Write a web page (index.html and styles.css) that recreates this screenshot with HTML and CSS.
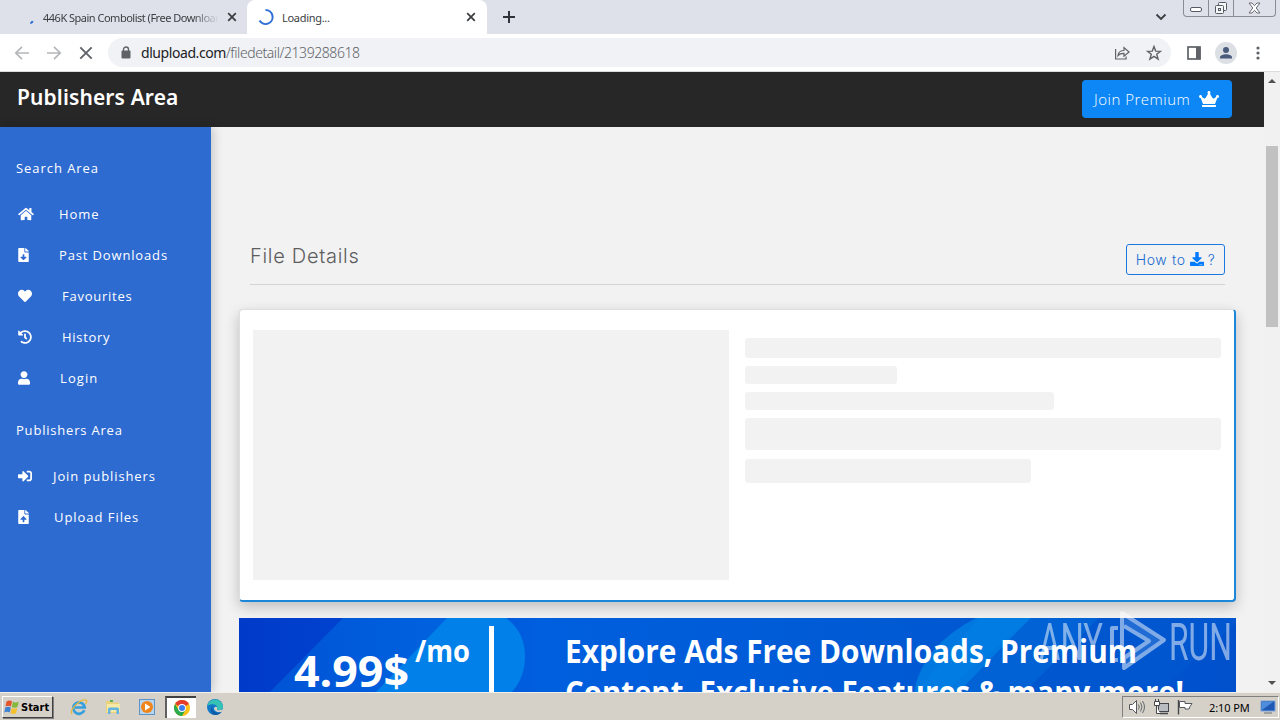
FILE: index.html
```html
<!DOCTYPE html>
<html lang="en">
<head>
    <meta charset="UTF-8">
    <meta name="viewport" content="width=device-width, initial-scale=1.0">
    <title>Loading...</title>
    <link rel="stylesheet" href="styles.css">
</head>
<body>
    <!-- Tabs -->
    <div class="tabs">
        <div class="tab">
            <svg class="spinner" width="16" height="16" viewBox="0 0 16 16"><path d="M6.300 14.200q2-.3 2.300-2.200" fill="none" stroke="#2f6fd6" stroke-width="2"/></svg>
            <span class="tab-title tab-fade">446K Spain Combolist (Free Downloads)</span>
            <svg class="tab-close" width="10" height="10" viewBox="0 0 10 10"><path d="M1.200 1.200l7.600 7.600M8.800 1.200L1.200 8.800" stroke="#3c4043" stroke-width="1.800"/></svg>
        </div>
        <div class="tab active">
            <svg class="spinner" width="16" height="16" viewBox="0 0 16 16"><path d="M7.500 1A7 7 0 1 1 1.500 11.500" fill="none" stroke="#2f6fd6" stroke-width="2"/></svg>
            <span class="tab-title">Loading...</span>
            <svg class="tab-close" width="10" height="10" viewBox="0 0 10 10"><path d="M1.200 1.200l7.600 7.600M8.800 1.200L1.200 8.800" stroke="#3c4043" stroke-width="1.800"/></svg>
        </div>
        <svg class="new-tab" width="12" height="12" viewBox="0 0 12 12"><path d="M6 0v12M0 6h12" stroke="#303338" stroke-width="2"/></svg>
        <svg class="tab-search" width="12" height="8" viewBox="0 0 12 8"><path d="M1.500 1.500L6 6l4.500-4.500" fill="none" stroke="#3c4043" stroke-width="1.900"/></svg>
        <div class="win-buttons">
            <span class="win-min"><svg width="13" height="6" viewBox="0 0 13 6"><rect x=".5" y=".5" width="11" height="4" rx="1.500" fill="#fff" stroke="#555a63"/></svg></span>
            <span class="win-max"><svg width="14" height="14" viewBox="0 0 14 14" fill="#f5f6f8" stroke="#555a63"><rect x="4.500" y="1.500" width="8" height="8" rx="1"/><rect x="1.500" y="4.500" width="8" height="8" rx="1"/><rect x="4.500" y="7.500" width="2" height="2"/></svg></span>
            <span class="win-close"><svg width="13" height="12" viewBox="0 0 13 12"><path d="M1 1h3l2.500 2.700L9 1h3L8.200 6l3.800 5H9L6.500 8.300 4 11H1l3.800-5z" fill="#fff" stroke="#666b74"/></svg></span>
        </div>
    </div>

    <!-- Toolbar -->
    <div class="toolbar">
        <svg class="nav-icon" width="16" height="16" viewBox="0 0 16 16" fill="none" stroke="#b4b6b9" stroke-width="1.700"><path d="M15 8H2M8 1.800L1.800 8 8 14.200"/></svg>
        <svg class="nav-icon" width="16" height="16" viewBox="0 0 16 16" fill="none" stroke="#b4b6b9" stroke-width="1.700"><path d="M1 8h13M8 1.800L14.200 8 8 14.200"/></svg>
        <svg class="nav-icon" width="16" height="16" viewBox="0 0 16 16" fill="none" stroke="#5f6368" stroke-width="1.900"><path d="M2.300 2.300l11.400 11.400M13.700 2.300L2.300 13.700"/></svg>
        <div class="address">
            <svg width="10" height="13" viewBox="0 0 10 13"><rect x=".5" y="4.500" width="9" height="8" rx="1" fill="#5f6368"/><path d="M2.500 5V3.500a2.500 2.500 0 0 1 5 0V5" fill="none" stroke="#5f6368" stroke-width="1.400"/></svg>
            <span class="url"><b>dlupload.com</b>/filedetail/2139288618</span>
            <svg class="share" width="16" height="14" viewBox="0 0 16 14" fill="none" stroke="#5f6368" stroke-width="1.200"><path d="M1.600 3v10h10.500v-2.500M4 9.500C4.500 6 6.500 4.500 10 4.500v-3l5 4.500-5 4.200V7.300C7.500 7.200 5.500 7.800 4 9.500z"/></svg>
            <svg width="16" height="16" viewBox="0 0 16 16" fill="none" stroke="#5f6368" stroke-width="1.400"><path d="M8 1.500l1.700 4.600 4.900.2-3.900 3 1.400 4.700L8 11.300 3.900 14l1.400-4.700-3.900-3 4.900-.2z"/></svg>
        </div>
        <svg class="side-panel" width="14" height="14" viewBox="0 0 14 14"><rect x="1" y="1" width="12" height="12" fill="#fff" stroke="#5f6368" stroke-width="1.700"/><path d="M9 1h4.500v12H9z" fill="#5f6368"/></svg>
        <svg class="avatar" width="22" height="22" viewBox="0 0 22 22"><circle cx="11" cy="11" r="11" fill="#dcdfe4"/><circle cx="11" cy="8" r="3" fill="#4b5b7c"/><path d="M5 16.500v-1.300c0-2 3.500-3 6-3s6 1 6 3v1.300z" fill="#4b5b7c"/></svg>
        <svg class="dots" width="4" height="14" viewBox="0 0 4 14" fill="#5f6368"><circle cx="2" cy="2" r="1.600"/><circle cx="2" cy="7" r="1.600"/><circle cx="2" cy="12" r="1.600"/></svg>
    </div>

    <!-- Page -->
    <div class="viewport">
        <div class="page">
            <header class="topbar">
                <span class="brand">Publishers Area</span>
                <a class="btn-premium">Join Premium
                    <svg width="20" height="16" viewBox="0 0 640 512" fill="#fff"><path d="M528 448H112c-8.800 0-16 7.200-16 16v32c0 8.800 7.200 16 16 16h416c8.800 0 16-7.200 16-16v-32c0-8.800-7.200-16-16-16zm64-320c-26.500 0-48 21.500-48 48 0 7.100 1.600 13.700 4.400 19.800L476 239.200c-15.400 9.200-35.300 4-44.200-11.600L350.300 85C361 76.200 368 63 368 48c0-26.500-21.500-48-48-48s-48 21.500-48 48c0 15 7 28.200 17.700 37l-81.500 142.600c-8.900 15.600-28.900 20.800-44.200 11.600l-72.300-43.400c2.700-6 4.400-12.700 4.400-19.800 0-26.500-21.500-48-48-48S0 149.500 0 176s21.500 48 48 48c2.600 0 5.200-.4 7.700-.8L128 416h384l72.300-192.800c2.500.4 5.100.8 7.700.8 26.500 0 48-21.500 48-48s-21.500-48-48-48z"/></svg>
                </a>
            </header>
            <div class="content">
                <nav class="sidebar">
                    <h3>Search Area</h3>
                    <a class="item"><svg width="16" height="14" viewBox="0 0 576 512"><path d="M280.370 148.260L96 300.110V464a16 16 0 0 0 16 16l112.060-.29a16 16 0 0 0 15.920-16V368a16 16 0 0 1 16-16h64a16 16 0 0 1 16 16v95.640a16 16 0 0 0 16 16.050L464 480a16 16 0 0 0 16-16V300L295.670 148.260a12.190 12.190 0 0 0-15.300 0zM571.600 251.470L488 182.560V44.050a12 12 0 0 0-12-12h-56a12 12 0 0 0-12 12v72.610L318.470 43a48 48 0 0 0-61 0L4.340 251.470a12 12 0 0 0-1.600 16.900l25.500 31A12 12 0 0 0 45.150 301l235.220-193.740a12.190 12.190 0 0 1 15.300 0L530.900 301a12 12 0 0 0 16.900-1.600l25.500-31a12 12 0 0 0-1.700-16.930z"/></svg><span class="home">Home</span></a>
                    <a class="item"><svg width="11" height="14" viewBox="0 0 384 512"><path d="M224 136V0H24C10.700 0 0 10.700 0 24v464c0 13.300 10.700 24 24 24h336c13.300 0 24-10.700 24-24V160H248c-13.200 0-24-10.800-24-24zm76.450 211.360l-96.420 95.700c-6.650 6.610-17.390 6.610-24.040 0l-96.420-95.700C73.420 337.290 80.540 320 94.820 320H160v-80c0-8.840 7.160-16 16-16h32c8.840 0 16 7.160 16 16v80h65.180c14.280 0 21.400 17.290 11.270 27.360zM377 105L279.100 7c-4.500-4.500-10.600-7-17-7H256v128h128v-6.100c0-6.300-2.500-12.400-7-16.900z"/></svg><span class="past">Past Downloads</span></a>
                    <a class="item"><svg width="14" height="14" viewBox="0 0 512 512"><path d="M462.300 62.600C407.500 15.900 326 24.300 275.700 76.200L256 96.500l-19.700-20.300C186.100 24.300 104.500 15.900 49.700 62.600c-62.800 53.600-66.100 149.800-9.900 207.900l193.500 199.800c12.500 12.900 32.800 12.900 45.300 0l193.500-199.800c56.300-58.100 53-154.300-9.800-207.900z"/></svg><span class="fav">Favourites</span></a>
                    <a class="item"><svg width="14" height="14" viewBox="0 0 512 512"><path d="M504 255.531c.253 136.640-111.180 248.372-247.820 248.468-59.015.042-113.223-20.530-155.822-54.911-11.077-8.940-11.905-25.541-1.839-35.607l11.267-11.267c8.609-8.609 22.353-9.551 31.891-1.984C173.062 425.135 212.781 440 256 440c101.705 0 184-82.311 184-184 0-101.705-82.311-184-184-184-48.814 0-93.149 18.969-126.068 49.932l50.754 50.754c10.080 10.080 2.941 27.314-11.313 27.314H24c-8.837 0-16-7.163-16-16V38.627c0-14.254 17.234-21.393 27.314-11.314l49.372 49.372C129.209 34.136 189.552 8 256 8c136.810 0 247.747 110.780 248 247.531zm-180.912 78.784l9.823-12.630c8.138-10.463 6.253-25.542-4.210-33.679L288 256.349V152c0-13.255-10.745-24-24-24h-16c-13.255 0-24 10.745-24 24v135.651l65.409 50.874c10.463 8.137 25.541 6.253 33.679-4.210z"/></svg><span class="hist">History</span></a>
                    <a class="item"><svg width="12" height="14" viewBox="0 0 448 512"><path d="M224 256c70.700 0 128-57.300 128-128S294.700 0 224 0 96 57.300 96 128s57.300 128 128 128zm89.600 32h-16.700c-22.200 10.200-46.900 16-72.900 16s-50.600-5.800-72.900-16h-16.700C60.200 288 0 348.200 0 422.400V464c0 26.500 21.500 48 48 48h352c26.500 0 48-21.500 48-48v-41.600c0-74.200-60.200-134.400-134.400-134.400z"/></svg><span class="login">Login</span></a>
                    <h3>Publishers Area</h3>
                    <a class="item"><svg width="14" height="14" viewBox="0 0 512 512"><path d="M416 448h-84c-6.600 0-12-5.400-12-12v-40c0-6.600 5.400-12 12-12h84c17.700 0 32-14.300 32-32V160c0-17.700-14.300-32-32-32h-84c-6.600 0-12-5.400-12-12V76c0-6.600 5.400-12 12-12h84c53 0 96 43 96 96v192c0 53-43 96-96 96zm-47-201L201 79c-15-15-41-4.500-41 17v96H24c-13.300 0-24 10.700-24 24v96c0 13.300 10.700 24 24 24h136v96c0 21.500 26 32 41 17l168-168c9.300-9.400 9.300-24.600 0-34z"/></svg><span class="join">Join publishers</span></a>
                    <a class="item"><svg width="11" height="14" viewBox="0 0 384 512"><path d="M224 136V0H24C10.700 0 0 10.700 0 24v464c0 13.300 10.700 24 24 24h336c13.300 0 24-10.700 24-24V160H248c-13.200 0-24-10.800-24-24zm65.180 216.010H224v80c0 8.840-7.160 16-16 16h-32c-8.840 0-16-7.160-16-16v-80H94.820c-14.280 0-21.410-17.290-11.270-27.360l96.420-95.700c6.650-6.610 17.390-6.610 24.040 0l96.420 95.700c10.150 10.070 3.030 27.360-11.250 27.360zM377 105L279.100 7c-4.500-4.500-10.600-7-17-7H256v128h128v-6.100c0-6.300-2.500-12.400-7-16.900z"/></svg><span class="upload">Upload Files</span></a>
                </nav>
                <main class="main">
                    <div class="title-row">
                        <h2>File Details</h2>
                        <a class="btn-how">How to
                            <svg width="14" height="14" viewBox="0 0 512 512" fill="#007bff"><path d="M216 0h80c13.300 0 24 10.700 24 24v168h87.700c17.800 0 26.700 21.500 14.100 34.100L269.700 378.300c-7.500 7.500-19.800 7.500-27.300 0L90.100 226.100c-12.600-12.600-3.700-34.100 14.100-34.100H192V24c0-13.300 10.700-24 24-24zm296 376v112c0 13.300-10.700 24-24 24H24c-13.300 0-24-10.700-24-24V376c0-13.300 10.700-24 24-24h146.700l49 49c20.100 20.100 52.500 20.100 72.600 0l49-49H488c13.300 0 24 10.700 24 24zm-124 88c0-11-9-20-20-20s-20 9-20 20 9 20 20 20 20-9 20-20zm64 0c0-11-9-20-20-20s-20 9-20 20 9 20 20 20 20-9 20-20z"/></svg>
                            ?</a>
                    </div>
                    <div class="card">
                        <div class="skeleton thumb"></div>
                        <div class="lines">
                            <div class="skeleton line1"></div>
                            <div class="skeleton line2"></div>
                            <div class="skeleton line3"></div>
                            <div class="skeleton line4"></div>
                            <div class="skeleton line5"></div>
                        </div>
                    </div>
                    <svg class="banner" width="997" height="74" viewBox="0 0 997 74">
                        <defs>
                            <linearGradient id="bg" x1="0" y1="0" x2="1" y2="0">
                                <stop offset="0" stop-color="#003ac8"/>
                                <stop offset=".1" stop-color="#0042cf"/>
                                <stop offset=".3" stop-color="#005fde"/>
                                <stop offset=".7" stop-color="#0059d2"/>
                                <stop offset="1" stop-color="#0050cc"/>
                            </linearGradient>
                            <linearGradient id="left" x1="0" y1="0" x2="1" y2="0">
                                <stop offset="0" stop-color="#0054d6"/>
                                <stop offset="1" stop-color="#0064e0"/>
                            </linearGradient>
                        </defs>
                        <rect width="997" height="74" fill="url(#bg)"/>
                        <path d="M104 0H230L150 74H31z" fill="url(#left)"/>
                        <path d="M208 0h59c14 10 19 24 19 39 0 14-5 26-13 35H137z" fill="#0080e8"/>
                        <path d="M737 0q-54 28-62 74h45L792 0z" fill="#0078e0"/>
                        <path d="M792 0H860L786 74H720z" fill="#0062d4"/>
                        <path d="M740 0L676 74H706L792 0z" fill="#007ce2"/>
                        <path d="M860 0H997V5L920 74H786z" fill="#0056ce"/>
                        <rect x="250" y="8" width="5" height="66" fill="#fff"/>
                        <g fill="#fff" font-family="'Open Sans', 'Noto Sans', sans-serif" font-weight="700">
                            <text x="55" y="69" font-size="43" textLength="115" lengthAdjust="spacingAndGlyphs">4.99$</text>
                            <text x="176" y="44" font-size="31" textLength="55" lengthAdjust="spacingAndGlyphs">/mo</text>
                            <text x="326" y="45" font-size="32" textLength="572" lengthAdjust="spacingAndGlyphs">Explore Ads Free Downloads, Premium</text>
                            <text x="326" y="86" font-size="32" textLength="619" lengthAdjust="spacingAndGlyphs">Content, Exclusive Features &amp; many more!</text>
                        </g>
                    </svg>
                </main>
            </div>
        </div>
        <div class="scrollbar">
            <i class="arrow-up"></i>
            <div class="thumb-bar"></div>
            <i class="arrow-down"></i>
        </div>
    </div>

    <!-- Taskbar -->
    <div class="taskbar">
        <div class="start">
            <svg width="16" height="16" viewBox="0 0 16 16"><path d="M2.500 2.500q3-2 5.500-.3L7 7.500q-2.500-1.500-5.500 0z" fill="#e5532a"/><path d="M8.800 2.700q3 1.500 6-.2L13.500 8q-3 1.400-5.600 0z" fill="#86b83b"/><path d="M1.300 8.500q3-1.500 5.500 0l-1 5q-2.500-1.500-5.500 0z" fill="#3f82cf"/><path d="M7.700 9q2.800 1.400 5.600 0l-1.200 5.200q-3 1.400-5.500 0z" fill="#f5c02c"/></svg>
            <b>Start</b>
        </div>
        <div class="launch">
            <svg width="18" height="18" viewBox="0 0 18 18" fill="none"><path d="M14.300 12.300A5.700 5.700 0 1 1 14.700 9.500H5" stroke="#35a0dc" stroke-width="2.700"/><path d="M2 16C-1 12 10 1 16 2q2 1-.5 4" stroke="#e8b83c" stroke-width="1.300"/></svg>
        </div>
        <div class="launch">
            <svg width="18" height="18" viewBox="0 0 18 18"><path d="M2 3h5l1 1.500h7V15H2z" fill="#e9d27a"/><path d="M3 6h13v8H3z" fill="#f6e9a8"/><path d="M4 16v-5q0-1.500 1.500-1.500h8Q15 9.500 15 11v5h-2.500v-4h-6v4z" fill="#63b5df"/><path d="M6 3h3" stroke="#5ab04d" stroke-width="2"/></svg>
        </div>
        <div class="launch">
            <svg width="18" height="18" viewBox="0 0 18 18"><rect x="1.500" y="1.500" width="15" height="15" fill="#b8d4ee" stroke="#5e93c8"/><circle cx="9" cy="9" r="6" fill="#f08519"/><path d="M7 5.500l5.500 3.500L7 12.500z" fill="#fff"/></svg>
        </div>
        <div class="launch pressed">
            <svg width="16" height="16" viewBox="0 0 16 16"><circle cx="8" cy="8" r="8" fill="#fbc116"/><path d="M8 8L1.070 4A8 8 0 0 1 14.930 4z" fill="#e33b2e"/><path d="M1.070 4A8 8 0 0 0 8 16l3.500-6L8 8 4.500 10z" fill="#2da94f"/><circle cx="8" cy="8" r="3.900" fill="#fff"/><circle cx="8" cy="8" r="3" fill="#3b7ded"/></svg>
        </div>
        <div class="launch">
            <svg width="18" height="18" viewBox="0 0 18 18"><circle cx="9" cy="9" r="8" fill="#1478c8"/><path d="M1.200 8A8 8 0 0 1 17 8.500c0 3-2.500 4-5 3.500-1.500-.5-1-1.500-.7-2.500C11.500 6.500 5 4.500 1.200 8z" fill="#35c1b4"/><path d="M7 8.500c-2 3 1 7 6.500 6 1.500-.3 2.500-1.300 2.500-1.300A8 8 0 0 1 9 17C4 16 4 10 7 8.500z" fill="#0c5aa8"/><path d="M17 11c-2 1.500-5.500 1.500-6 .5-.3-.7.300-1 .3-2C10 8 8 9 8 11c1 3 5 4 8 2.500z" fill="#d5d0c8"/></svg>
        </div>
        <div class="tray">
            <svg width="18" height="16" viewBox="0 0 18 16"><path d="M1.500 5.500h3l4-4v13l-4-4h-3z" fill="#fff" stroke="#55585c"/><path d="M10.500 5.500q1.500 2.500 0 5M12.500 3.500q3 4.500 0 9M14.500 2q4 6 0 12" fill="none" stroke="#666a6e"/></svg>
            <svg width="17" height="16" viewBox="0 0 17 16"><rect x="5.500" y="4.500" width="10" height="8" fill="#b9bcc0" stroke="#44474b"/><path d="M7 14.500h8" stroke="#44474b" stroke-width="1.500"/><path d="M1.500 2.500h5v4h-5zM3.500 7v7.500H7M2.500 0v2M5.500 0v2" fill="#fff" stroke="#44474b"/></svg>
            <svg width="17" height="16" viewBox="0 0 17 16"><path d="M1.500 1v14.500" stroke="#44474b" stroke-width="1.400"/><path d="M2.500 2.500h5.500v2h7l-2 3-1 2.500H8V8.500H2.500z" fill="#fff" stroke="#55585c"/></svg>
            <span class="clock">2:10 PM</span>
            <svg class="desktop" width="16" height="14" viewBox="0 0 16 14"><rect x="1" y="1" width="14" height="10" fill="#1f59b5" stroke="#7ba4d8"/><path d="M2 10L13 2H2z" fill="#4d8ddb"/><path d="M4 13h8" stroke="#6b7078"/></svg>
        </div>
    </div>

    <svg class="watermark" width="196" height="66" viewBox="0 0 196 66">
        <g fill="#fff" font-family="Roboto, sans-serif" font-weight="400">
            <text x="1" y="52" font-size="51" textLength="64" lengthAdjust="spacingAndGlyphs">ANY</text>
            <text x="131" y="52" font-size="51" textLength="63" lengthAdjust="spacingAndGlyphs">RUN</text>
        </g>
        <path d="M80 20h-6v32h6M84 42V5l42 27-40 28V50l25-17-25-15" fill="none" stroke="#fff" stroke-width="4" stroke-linejoin="round"/>
        <path d="M84 4l43 28-43 29V48l24-15-24-16z" fill="#fff" fill-opacity=".25"/>
    </svg>
</body>
</html>
```

FILE: styles.css
```css
* {
    box-sizing: border-box;
}

body {
    margin: 0;
    width: 1280px;
    height: 720px;
    overflow: hidden;
    position: relative;
    display: flex;
    flex-direction: column;
    font-family: 'Open Sans', 'Noto Sans', sans-serif;
    background: #fff;
}

svg {
    display: block;
    flex-shrink: 0;
}

/* Tabs */
.tabs {
    display: flex;
    align-items: center;
    height: 34px;
    background: #dee1e9;
}

.tab {
    display: flex;
    align-items: center;
    width: 247px;
    height: 34px;
    padding: 0 10px 0 24px;
}

.tab.active {
    width: 240px;
    padding: 0 11px 0 12px;
    background: #fff;
    border-radius: 8px 8px 0 0;
}

.active .spinner {
    margin-left: -1px;
    margin-right: 1px;
}

.tab-title {
    flex: 1;
    margin: 0 8px 0 3px;
    font-family: 'Noto Sans', sans-serif;
    font-size: 11px;
    letter-spacing: -0.3px;
    color: #3c4043;
    white-space: nowrap;
    overflow: hidden;
}

.active .tab-title {
    margin-left: 7px;
}

.tab-fade {
    letter-spacing: -0.5px;
    -webkit-mask-image: linear-gradient(90deg, #000 85%, transparent);
    mask-image: linear-gradient(90deg, #000 85%, transparent);
}

.new-tab {
    margin-left: 16px;
}

.tab-search {
    margin-left: auto;
    margin-right: 16px;
}

.win-buttons {
    display: flex;
    align-self: flex-start;
    width: 93px;
    height: 17px;
    margin-right: 4px;
    border: 1px solid #888d97;
    border-top: 0;
    border-radius: 0 0 4px 4px;
}

.win-buttons span {
    display: flex;
    align-items: center;
    justify-content: center;
    width: 25px;
    border-right: 1px solid #888d97;
}

.win-buttons .win-min {
    padding-top: 4px;
}

.win-buttons .win-close {
    flex: 1;
    border: 0;
}

/* Toolbar */
.toolbar {
    display: flex;
    align-items: center;
    height: 38px;
    padding: 0 20px 0 14px;
    border-bottom: 1px solid #d9dbde;
}

.nav-icon {
    margin-right: 16px;
}

.address {
    display: flex;
    align-items: center;
    width: 1063px;
    height: 29px;
    margin-left: -2px;
    padding: 0 9px 0 13px;
    border-radius: 15px;
    background: #f0f2f5;
}

.url {
    margin-left: 10px;
    font-family: 'Noto Sans', sans-serif;
    font-size: 14px;
    letter-spacing: -0.43px;
    font-weight: 300;
    color: #5f6368;
}

.url b {
    font-weight: 400;
    color: #202124;
}

.share {
    margin-left: auto;
    margin-right: 16px;
}

.side-panel {
    margin-left: 16px;
}

.avatar {
    margin-left: 14px;
}

.dots {
    margin-left: auto;
}

/* Page */
.viewport {
    display: flex;
    height: 620px;
    overflow: hidden;
}

.page {
    width: 1264px;
    height: 620px;
    background: #f2f2f2;
}

.topbar {
    display: flex;
    align-items: center;
    justify-content: space-between;
    height: 55px;
    padding: 0 32px 2px 17px;
    background: #272727;
    color: #fff;
}

.brand {
    font-family: 'Noto Sans', sans-serif;
    font-size: 21px;
    font-weight: 600;
    line-height: 28px;
    letter-spacing: 0.12px;
    margin-bottom: 4px;
}

.btn-premium {
    display: flex;
    align-items: center;
    justify-content: space-between;
    width: 150px;
    height: 38px;
    padding: 0 13px 0 12px;
    border-radius: 4px;
    background: #0d87f5;
    font-size: 15px;
    font-weight: 300;
    letter-spacing: 0.5px;
}

.content {
    display: flex;
    height: 565px;
}

.sidebar {
    width: 211px;
    padding-top: 31px;
    background: #2e6bd0;
    box-shadow: 2px 0 10px rgba(0, 0, 0, 0.2);
    color: #fff;
    font-size: 13px;
    letter-spacing: 0.95px;
}

.sidebar h3 {
    margin: 0 0 15px 16px;
    font-size: 13px;
    font-weight: 400;
    line-height: 20px;
}

.item {
    display: flex;
    align-items: center;
    height: 41px;
    padding-left: 18px;
}

.item svg {
    fill: #fff;
}

.item + h3 {
    margin-top: 22px;
    letter-spacing: 0.8px;
}

.home { margin-left: 25px; }
.past { margin-left: 30px; letter-spacing: 0.85px; }
.fav,
.hist { margin-left: 30px; }
.fav { letter-spacing: 0.75px; }
.hist { letter-spacing: 0.7px; }
.login { margin-left: 30px; letter-spacing: 1.1px; }
.join { margin-left: 21px; letter-spacing: 0.9px; }
.upload { margin-left: 25px; }

.main {
    width: 997px;
    margin-left: 28px;
    padding-top: 117px;
}

.title-row {
    display: flex;
    justify-content: space-between;
    height: 41px;
    margin: 0 11px 24px;
    border-bottom: 1px solid #d4d4d4;
}

.title-row h2 {
    margin: 0;
    font-family: Inter, sans-serif;
    font-size: 20px;
    font-weight: 300;
    line-height: 24px;
    letter-spacing: 0.7px;
    color: #5d5d60;
}

.btn-how {
    display: flex;
    align-items: center;
    justify-content: center;
    gap: 4px;
    width: 99px;
    height: 31px;
    padding-bottom: 1px;
    border: 1px solid #1b78e0;
    border-radius: 3px;
    font-family: Inter, sans-serif;
    font-size: 14px;
    font-weight: 300;
    letter-spacing: 0.65px;
    color: #1a6cd0;
}

.card {
    display: flex;
    gap: 16px;
    height: 293px;
    padding: 20px 13px;
    border: 1px solid #dedede;
    border-right: 2px solid #1c86d9;
    border-bottom: 2px solid #1c86d9;
    border-radius: 4px;
    background: #fff;
    box-shadow: 0 5px 14px rgba(0, 0, 0, 0.22);
}

.skeleton {
    border-radius: 3px;
    background: #f2f2f2;
}

.thumb {
    width: 476px;
    height: 250px;
    border-radius: 0;
}

.lines {
    flex: 1;
    padding-top: 8px;
}

.line1 {
    width: 476px;
    height: 20px;
    margin-bottom: 8px;
}

.line2 {
    width: 152px;
    height: 18px;
    margin-bottom: 8px;
}

.line3 {
    width: 309px;
    height: 18px;
    margin-bottom: 8px;
}

.line4 {
    width: 476px;
    height: 32px;
    margin-bottom: 9px;
}

.line5 {
    width: 286px;
    height: 24px;
}

.banner {
    margin-top: 16px;
}

/* Scrollbar */
.scrollbar {
    display: flex;
    flex-direction: column;
    align-items: center;
    width: 16px;
    padding: 7px 0;
    background: #f1f1f1;
}

.thumb-bar {
    width: 12px;
    height: 181px;
    margin-top: 63px;
    background: #c1c1c1;
}

.arrow-up,
.arrow-down {
    border: 4px solid transparent;
    border-top-width: 0;
    border-bottom: 4px solid #505050;
}

.arrow-down {
    margin-top: auto;
    border-bottom: 0;
    border-top: 4px solid #505050;
}

/* Taskbar */
.taskbar {
    display: flex;
    align-items: center;
    height: 28px;
    padding: 1px 1px 0 2px;
    background: #d5d0c8;
    border-top: 1px solid #f3f0ea;
}

.start {
    display: flex;
    align-items: center;
    gap: 1px;
    width: 51px;
    height: 22px;
    margin-right: 11px;
    padding-left: 1px;
    border: 1px solid #fff;
    border-right: 1px solid #404040;
    border-bottom: 1px solid #404040;
    box-shadow: 1px 1px 0 #808080;
    font-family: 'DejaVu Sans Condensed', 'DejaVu Sans', sans-serif;
    font-size: 11px;
}

.launch {
    display: flex;
    align-items: center;
    justify-content: center;
    width: 30px;
    height: 22px;
    margin-right: 4px;
}

.launch.pressed {
    width: 31px;
    margin-left: -1px;
    background: #fff;
    border-top: 2px solid #404040;
    border-left: 2px solid #606060;
}

.tray {
    display: flex;
    align-items: center;
    gap: 7px;
    width: 157px;
    height: 22px;
    margin-left: auto;
    padding: 0 2px 0 5px;
    border: 1px solid #fff;
    border-top: 1px solid #808080;
    border-left: 1px solid #808080;
}

.clock {
    margin-left: 8px;
    font-family: 'Noto Sans', sans-serif;
    font-size: 11px;
    letter-spacing: -0.1px;
    color: #000;
    white-space: nowrap;
}

.desktop {
    margin-left: auto;
}

/* Watermark over the corner */
.watermark {
    position: absolute;
    left: 1038px;
    top: 608px;
    opacity: 0.5;
}
```
